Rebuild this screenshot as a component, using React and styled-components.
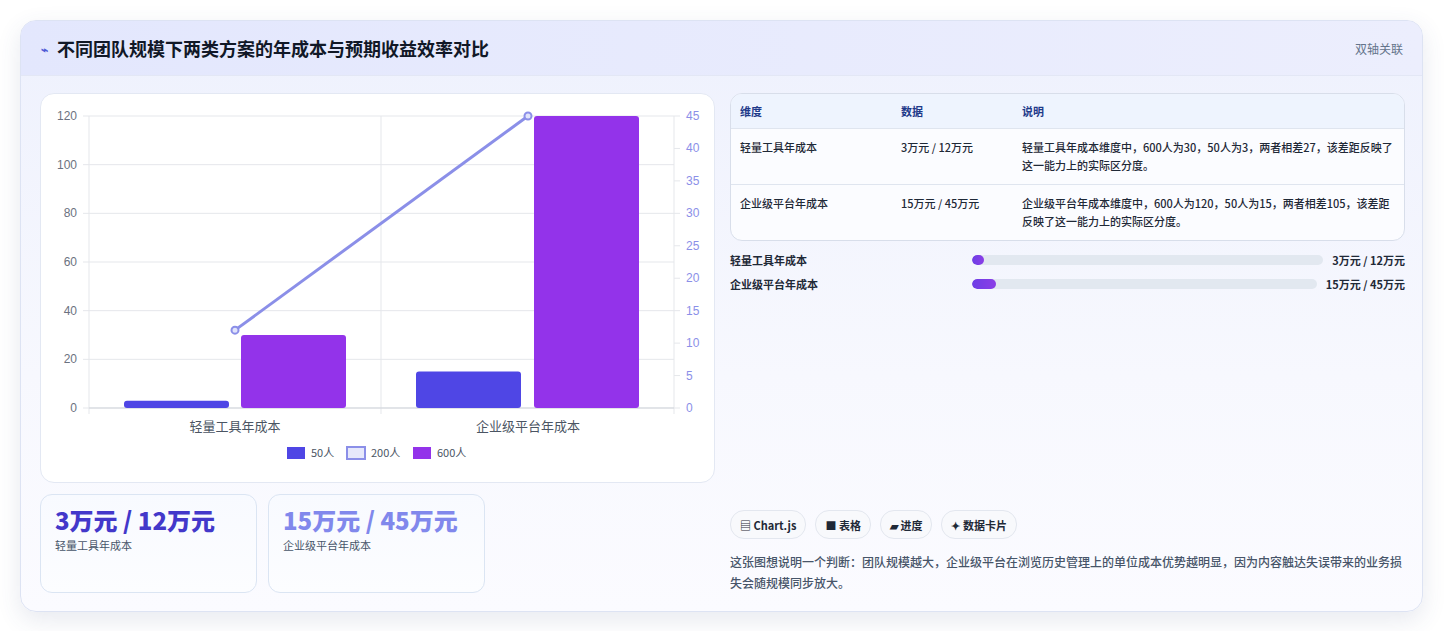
import React from "react";
import styled, { createGlobalStyle } from "styled-components";

const Global = createGlobalStyle`
  body { margin: 0; background: #fff; font-family: "Noto Sans CJK SC", "Noto Sans", sans-serif; }
`;

const Page = styled.div`
  padding: 20px 21px 20px 20px;
`;

const Card = styled.div`
  border: 1px solid #dde3f3;
  border-radius: 16px;
  background: linear-gradient(180deg, #eef1fd 0%, #f7f8fe 60%, #fbfbff 100%);
  box-shadow: 0 8px 24px rgba(60, 70, 120, 0.12);
  overflow: hidden;
  height: 590px;
  display: flex;
  flex-direction: column;
`;

const Header = styled.div`
  height: 55px;
  display: flex;
  align-items: center;
  justify-content: space-between;
  padding: 0 19px 0 20px;
  background: linear-gradient(90deg, #e3e7fd, #eceefd);
  border-bottom: 1px solid #e3e7f5;
`;

const Title = styled.h1`
  margin: 0;
  font-size: 18px;
  font-weight: 700;
  color: #111827;
  display: flex;
  align-items: center;
  gap: 9px;
`;

const Bolt = styled.span`
  color: #4f5bd5;
  font-size: 12px;
`;

const Tag = styled.span`
  font-size: 12px;
  color: #64748b;
`;

const Body = styled.div`
  flex: 1;
  display: grid;
  grid-template-columns: 675px 675px;
  gap: 15px;
  padding: 17px 19px 18px 19px;
`;

const Left = styled.div`
  display: flex;
  flex-direction: column;
  gap: 11px;
`;

const ChartCard = styled.div`
  height: 388px;
  background: #fff;
  border: 1px solid #e3e8f3;
  border-radius: 14px;
  overflow: hidden;
`;

const Stats = styled.div`
  display: flex;
  gap: 11px;
`;

const Stat = styled.div`
  width: 217px;
  height: 99px;
  box-sizing: border-box;
  border: 1px solid #dbe5f3;
  border-radius: 12px;
  background: linear-gradient(180deg, #f8faff, #fcfdff);
  padding: 12px 14px;
`;

const StatValue = styled.div`
  font-size: 24px;
  font-weight: 800;
  line-height: 26px;
  color: ${(p) => p.$color};
`;

const StatLabel = styled.div`
  font-size: 11px;
  color: #475569;
  margin-top: 4px;
`;

const Right = styled.div`
  display: flex;
  flex-direction: column;
`;

const Table = styled.div`
  border: 1px solid #d8deea;
  border-radius: 12px;
  overflow: hidden;
  background: #fbfcff;
  font-size: 11px;
  color: #1f2937;
`;

const Row = styled.div`
  display: grid;
  grid-template-columns: 161px 121px 1fr;
  padding: ${(p) => (p.$head ? "8px 9px" : "9px 9px 10px")};
  background: ${(p) => (p.$head ? "#eef4fe" : "transparent")};
  color: ${(p) => (p.$head ? "#1e3a8a" : "#1f2937")};
  border-top: ${(p) => (p.$first ? "none" : "1px solid #dfe5ef")};
  line-height: 18px;
  font-weight: ${(p) => (p.$head ? 600 : 500)};
`;

const Bars = styled.div`
  display: flex;
  flex-direction: column;
  gap: 6px;
  margin-top: 10px;
`;

const BarRow = styled.div`
  display: flex;
  align-items: center;
  font-size: 11px;
  font-weight: 600;
  color: #1f2937;
  height: 18px;
`;

const BarLabel = styled.div`
  width: 242px;
`;

const Track = styled.div`
  flex: 1;
  height: 10px;
  background: #e2e8f0;
  border-radius: 5px;
  overflow: hidden;
`;

const Fill = styled.div`
  height: 100%;
  border-radius: 5px;
  background: linear-gradient(90deg, #6d3ee6, #8b3ee6);
`;

const BarValue = styled.div`
  margin-left: 9px;
  font-weight: 700;
`;

const Spacer = styled.div`
  flex: 1;
`;

const Chips = styled.div`
  display: flex;
  gap: 9px;
`;

const Chip = styled.span`
  height: 27px;
  padding: 0 9px;
  border: 1px solid #e3e7ef;
  border-radius: 14px;
  background: #f8f9fc;
  font-size: 11px;
  font-weight: 600;
  color: #1f2937;
  display: flex;
  align-items: center;
`;

const Note = styled.p`
  margin: 12px 0 0;
  font-size: 12px;
  line-height: 21px;
  color: #475569;
  font-weight: 500;
`;

function Chart() {
  const x0 = 48, x1 = 633, yTop = 22, yBot = 314;
  const h = yBot - yTop;
  const yl = (v) => yBot - (v / 120) * h;
  const yr = (v) => yBot - (v / 45) * h;
  const axis = { fontFamily: "Liberation Sans, sans-serif", fontSize: 12 };
  const bars = [
    { x: 83, v: 3, c: "#4f46e5" },
    { x: 200, v: 30, c: "#9333ea" },
    { x: 375, v: 15, c: "#4f46e5" },
    { x: 493, v: 120, c: "#9333ea" },
  ];
  return (
    <svg width="674" height="388">
      {[0, 20, 40, 60, 80, 100, 120].map((v) => (
        <g key={v}>
          <line x1={x0 - 6} x2={x1} y1={yl(v)} y2={yl(v)} stroke="#e5e7eb" />
          <text x={36} y={yl(v) + 4} textAnchor="end" fill="#6b7280" {...axis}>{v}</text>
        </g>
      ))}
      {[0, 5, 10, 15, 20, 25, 30, 35, 40, 45].map((v) => (
        <g key={v}>
          <line x1={x1} x2={x1 + 6} y1={yr(v)} y2={yr(v)} stroke="#e5e7eb" />
          <text x={645} y={yr(v) + 4} fill="#8b8fe8" {...axis}>{v}</text>
        </g>
      ))}
      {[x0, 340, x1].map((x) => (
        <line key={x} x1={x} x2={x} y1={yTop} y2={yBot + 6} stroke="#e5e7eb" />
      ))}
      <line x1={x0} x2={x1} y1={yBot} y2={yBot} stroke="#d1d5db" />
      {bars.map((b, i) => (
        <rect key={i} x={b.x} y={yl(b.v)} width={105} height={yBot - yl(b.v)} rx={3} fill={b.c} />
      ))}
      <line x1={194} y1={yr(12)} x2={487} y2={yr(45)} stroke="#8b8fe8" strokeWidth="3" />
      <circle cx={194} cy={yr(12)} r={3.5} fill="#e0e3fb" stroke="#8b8fe8" strokeWidth="2" />
      <circle cx={487} cy={yr(45)} r={3.5} fill="#e0e3fb" stroke="#8b8fe8" strokeWidth="2" />
      <text x={194} y={337} textAnchor="middle" fill="#4b5563" fontSize="13">轻量工具年成本</text>
      <text x={487} y={337} textAnchor="middle" fill="#4b5563" fontSize="13">企业级平台年成本</text>
      <g fontSize="11" fill="#4b5563">
        <rect x={246} y={353} width={18} height={12} fill="#4f46e5" />
        <text x={270} y={363}>50人</text>
        <rect x={306} y={353} width={18} height={12} fill="#e6e8fb" stroke="#8b8fe8" strokeWidth="2" />
        <text x={330} y={363}>200人</text>
        <rect x={372} y={353} width={18} height={12} fill="#9333ea" />
        <text x={396} y={363}>600人</text>
      </g>
    </svg>
  );
}

export default function App() {
  return (
    <Page>
      <Global />
      <Card>
        <Header>
          <Title><Bolt>⌁</Bolt>不同团队规模下两类方案的年成本与预期收益效率对比</Title>
          <Tag>双轴关联</Tag>
        </Header>
        <Body>
          <Left>
            <ChartCard><Chart /></ChartCard>
            <Stats>
              <Stat>
                <StatValue $color="#4338ca">3万元 / 12万元</StatValue>
                <StatLabel>轻量工具年成本</StatLabel>
              </Stat>
              <Stat>
                <StatValue $color="#8188ec">15万元 / 45万元</StatValue>
                <StatLabel>企业级平台年成本</StatLabel>
              </Stat>
            </Stats>
          </Left>
          <Right>
            <Table>
              <Row $head $first><span>维度</span><span>数据</span><span>说明</span></Row>
              <Row>
                <span>轻量工具年成本</span><span>3万元 / 12万元</span>
                <span>轻量工具年成本维度中，600人为30，50人为3，两者相差27，该差距反映了这一能力上的实际区分度。</span>
              </Row>
              <Row>
                <span>企业级平台年成本</span><span>15万元 / 45万元</span>
                <span>企业级平台年成本维度中，600人为120，50人为15，两者相差105，该差距反映了这一能力上的实际区分度。</span>
              </Row>
            </Table>
            <Bars>
              <BarRow>
                <BarLabel>轻量工具年成本</BarLabel>
                <Track><Fill style={{ width: "3.5%" }} /></Track>
                <BarValue>3万元 / 12万元</BarValue>
              </BarRow>
              <BarRow>
                <BarLabel>企业级平台年成本</BarLabel>
                <Track><Fill style={{ width: "7%" }} /></Track>
                <BarValue>15万元 / 45万元</BarValue>
              </BarRow>
            </Bars>
            <Spacer />
            <Chips>
              <Chip>▤ Chart.js</Chip>
              <Chip>■ 表格</Chip>
              <Chip>▰ 进度</Chip>
              <Chip>✦ 数据卡片</Chip>
            </Chips>
            <Note>这张图想说明一个判断：团队规模越大，企业级平台在浏览历史管理上的单位成本优势越明显，因为内容触达失误带来的业务损失会随规模同步放大。</Note>
          </Right>
        </Body>
      </Card>
    </Page>
  );
}
